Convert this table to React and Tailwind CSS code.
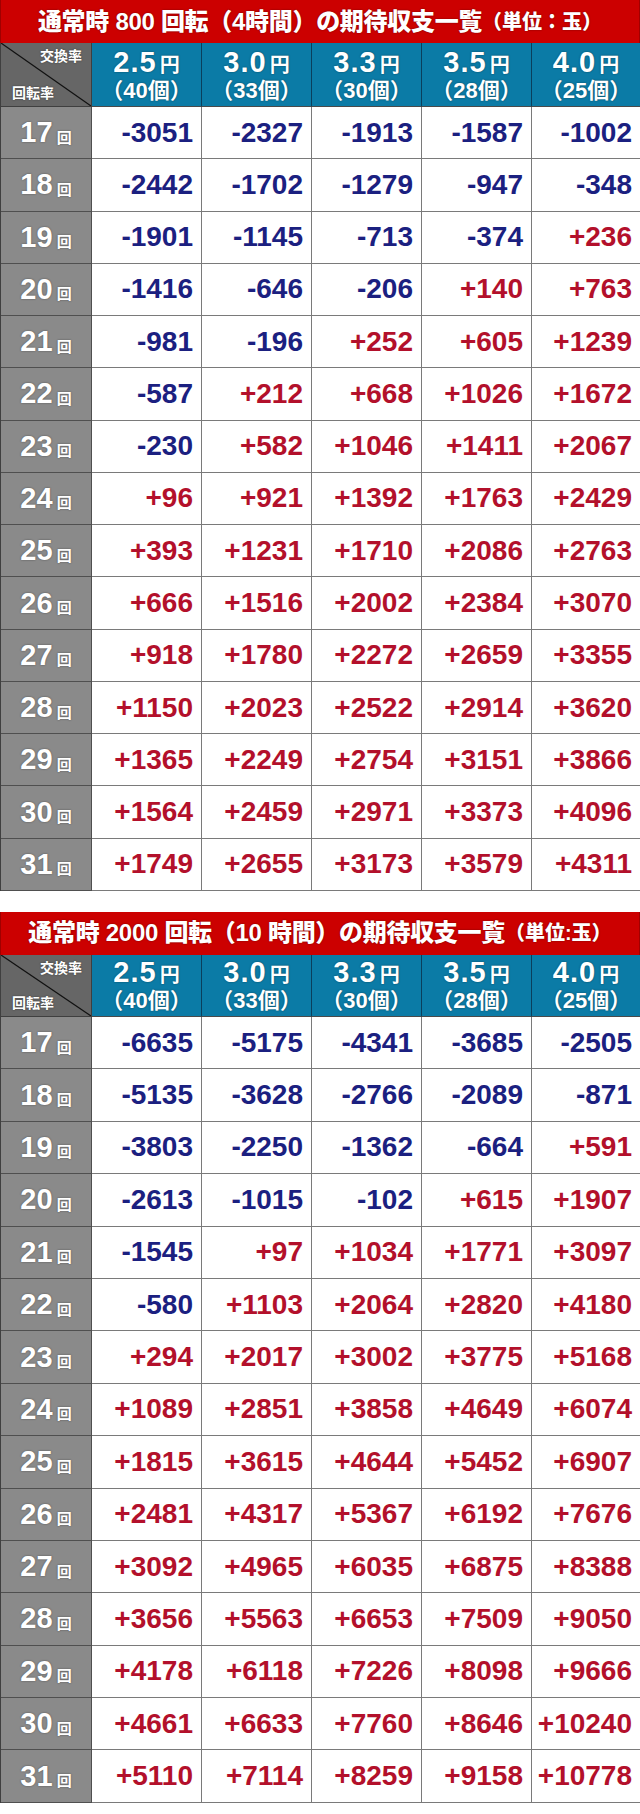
import React from "react";

const rates = [
  { yen: "2.5", balls: "40" },
  { yen: "3.0", balls: "33" },
  { yen: "3.3", balls: "30" },
  { yen: "3.5", balls: "28" },
  { yen: "4.0", balls: "25" },
];

const table800 = [
  [17, "-3051", "-2327", "-1913", "-1587", "-1002"],
  [18, "-2442", "-1702", "-1279", "-947", "-348"],
  [19, "-1901", "-1145", "-713", "-374", "+236"],
  [20, "-1416", "-646", "-206", "+140", "+763"],
  [21, "-981", "-196", "+252", "+605", "+1239"],
  [22, "-587", "+212", "+668", "+1026", "+1672"],
  [23, "-230", "+582", "+1046", "+1411", "+2067"],
  [24, "+96", "+921", "+1392", "+1763", "+2429"],
  [25, "+393", "+1231", "+1710", "+2086", "+2763"],
  [26, "+666", "+1516", "+2002", "+2384", "+3070"],
  [27, "+918", "+1780", "+2272", "+2659", "+3355"],
  [28, "+1150", "+2023", "+2522", "+2914", "+3620"],
  [29, "+1365", "+2249", "+2754", "+3151", "+3866"],
  [30, "+1564", "+2459", "+2971", "+3373", "+4096"],
  [31, "+1749", "+2655", "+3173", "+3579", "+4311"],
];

const table2000 = [
  [17, "-6635", "-5175", "-4341", "-3685", "-2505"],
  [18, "-5135", "-3628", "-2766", "-2089", "-871"],
  [19, "-3803", "-2250", "-1362", "-664", "+591"],
  [20, "-2613", "-1015", "-102", "+615", "+1907"],
  [21, "-1545", "+97", "+1034", "+1771", "+3097"],
  [22, "-580", "+1103", "+2064", "+2820", "+4180"],
  [23, "+294", "+2017", "+3002", "+3775", "+5168"],
  [24, "+1089", "+2851", "+3858", "+4649", "+6074"],
  [25, "+1815", "+3615", "+4644", "+5452", "+6907"],
  [26, "+2481", "+4317", "+5367", "+6192", "+7676"],
  [27, "+3092", "+4965", "+6035", "+6875", "+8388"],
  [28, "+3656", "+5563", "+6653", "+7509", "+9050"],
  [29, "+4178", "+6118", "+7226", "+8098", "+9666"],
  [30, "+4661", "+6633", "+7760", "+8646", "+10240"],
  [31, "+5110", "+7114", "+8259", "+9158", "+10778"],
];

const font = "font-['Liberation_Sans','Noto_Sans_CJK_JP',sans-serif]";
const shadow = "[text-shadow:0_0_2px_rgba(0,0,0,0.45)]";

const Corner = ({ height }) => (
  <div
    className={`relative bg-[#666666] border-r border-b border-[#3f3f3f] ${height}`}
  >
    <svg className="absolute inset-0 w-full h-full" preserveAspectRatio="none" viewBox="0 0 100 100">
      <line x1="0" y1="0" x2="100" y2="100" stroke="#111" strokeWidth="1.2" vectorEffect="non-scaling-stroke" />
    </svg>
    <span className={`absolute right-[9px] top-[6px] text-[14px] font-bold text-white leading-none ${shadow}`}>
      交換率
    </span>
    <span className={`absolute left-[11px] bottom-[6px] text-[14px] font-bold text-white leading-none ${shadow}`}>
      回転率
    </span>
  </div>
);

const RateTable = ({ title, unit, rows, headerH, rowH }) => (
  <div className={`w-[640px] ${font}`}>
    <div className="h-[43px] bg-[#cc0000] flex items-center justify-center text-white font-black border-x border-[#a00000]">
      <span className={`text-[24px] leading-none tracking-[-0.3px] ${shadow}`}>{title}</span>
      <span className={`text-[20px] leading-none ${shadow}`}>{unit}</span>
    </div>
    <div className="grid grid-cols-[91px_repeat(4,110px)_109px] border-l border-[#3f3f3f]">
      <Corner height={headerH} />
      {rates.map((r, i) => (
        <div
          key={r.yen}
          className={`bg-[#0b7ba6] border-b border-[#4a4a4a] flex flex-col items-center justify-center text-white font-bold ${headerH} ${
            i === 4 ? "border-r border-r-[#777]" : "border-r border-r-[#0a3f5c]"
          }`}
        >
          <div className={`flex items-baseline leading-none ${shadow}`}>
            <span className="text-[29px] tracking-[1px]">{r.yen}</span>
            <span className="text-[20px] ml-[3px]">円</span>
          </div>
          <div className={`text-[22px] leading-none mt-[3px] ${shadow}`}>（{r.balls}個）</div>
        </div>
      ))}
      {rows.map((row) => (
        <React.Fragment key={row[0]}>
          <div
            className={`bg-[#8a8a8a] border-r border-b border-[#4f4f4f] flex items-center justify-center text-white font-bold ${rowH}`}
          >
            <span className={`text-[29px] leading-none ${shadow}`}>{row[0]}</span>
            <span className={`text-[15px] leading-none ml-[4px] mt-[9px] ${shadow}`}>回</span>
          </div>
          {row.slice(1).map((v, i) => (
            <div
              key={i}
              className={`bg-white border-r border-b border-[#7a7a7a] flex items-center justify-end pr-[8px] text-[28px] font-bold leading-none ${rowH} ${
                v.startsWith("-") ? "text-[#1b2080]" : "text-[#b3102b]"
              }`}
            >
              {v}
            </div>
          ))}
        </React.Fragment>
      ))}
    </div>
  </div>
);

export default function App() {
  return (
    <div className="w-[640px] h-[1814px] bg-white flex flex-col">
      <RateTable
        title="通常時 800 回転（4時間）の期待収支一覧"
        unit="（単位：玉）"
        rows={table800}
        headerH="h-[64px]"
        rowH="h-[52.27px]"
      />
      <div className="h-[21px]" />
      <RateTable
        title="通常時 2000 回転（10 時間）の期待収支一覧"
        unit="（単位:玉）"
        rows={table2000}
        headerH="h-[62px]"
        rowH="h-[52.4px]"
      />
    </div>
  );
}
